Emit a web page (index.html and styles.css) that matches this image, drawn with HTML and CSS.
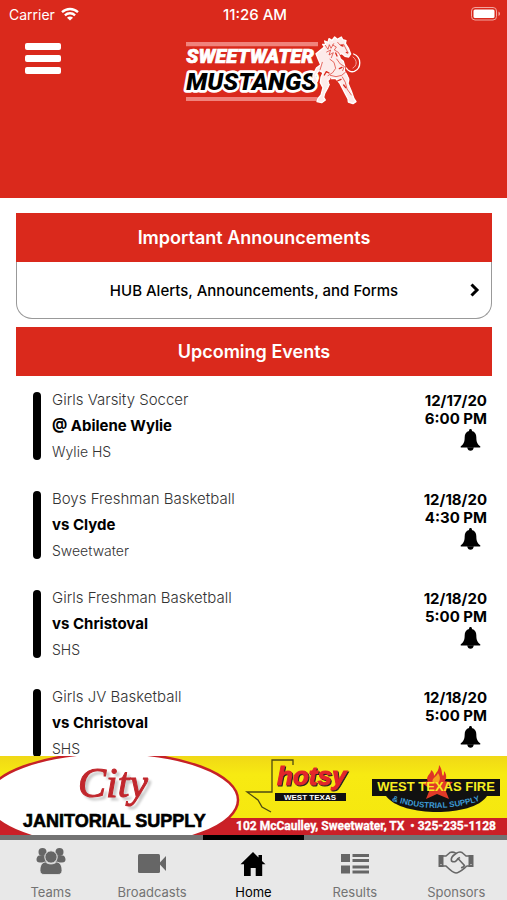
FILE: index.html
```html
<!DOCTYPE html>
<html lang="en">
<head>
  <meta charset="UTF-8">
  <meta name="viewport" content="width=device-width, initial-scale=1.0">
  <title>Sweetwater Mustangs</title>
  <link rel="stylesheet" href="styles.css">
</head>
<body>
  <!-- shared icons -->
  <svg class="sprite" width="0" height="0">
    <symbol id="bell" viewBox="0 0 22 24">
      <path d="M11 1c.9 0 1.500.6 1.500 1.500v.6c3 .8 4.600 3.200 4.600 6.500 0 5 1.200 7.400 4 9.400.5.4.3 1.500-.5 1.500H1.400c-.8 0-1-1.100-.5-1.500 2.800-2 4-4.400 4-9.400 0-3.300 1.600-5.700 4.600-6.500v-.6C9.500 1.600 10.100 1 11 1z"/>
      <path d="M7.500 20h7c-.4 2.400-1.700 3.700-3.500 3.700S7.900 22.400 7.500 20z"/>
    </symbol>
  </svg>

  <header class="header">
    <div class="status">
      <div class="carrier">
        <span>Carrier</span>
        <svg width="18" height="14" viewBox="0 0 18 14" fill="none" stroke="#fff" stroke-width="2.300">
          <path d="M1 5.200a11.600 11.600 0 0 1 16 0M3.900 8.300a7.400 7.400 0 0 1 10.200 0"/>
          <path d="M9 13.600L6 10.700a4.200 4.200 0 0 1 6 0z" fill="#fff" stroke="none"/>
        </svg>
      </div>
      <div class="clock">11:26 AM</div>
      <div class="battery">
        <svg width="30" height="14" viewBox="0 0 30 14">
          <rect x=".5" y=".5" width="25" height="12.500" rx="3.500" fill="none" stroke="#f2a59f"/>
          <rect x="2.500" y="2.500" width="21" height="8.500" rx="1.500" fill="#fff"/>
          <path d="M27.500 4.500c2 .8 2 3.700 0 4.500z" fill="#f2a59f"/>
        </svg>
      </div>
    </div>
    <div class="topbar">
      <button class="menu" type="button" aria-label="Menu">
        <span></span><span></span><span></span>
      </button>
      <svg class="logo" viewBox="33 30 540 210" role="img" aria-label="Sweetwater Mustangs">
        <path d="M45 51H441V64H45zM45 216H440V228H45z" fill="#f0837c"/>
        <text class="logo-top" x="46" y="114">SWEETWATER</text>
        <text class="logo-main" x="46" y="196">MUSTANGS</text>
        <!-- horse -->
        <g stroke-linejoin="round" stroke-linecap="round">
          <path d="M548 87c24 10 24 42 2 52-10 4-20-2-24-10" fill="none" stroke="#fff" stroke-width="4"/>
          <path d="M546 96c14 10 12 27 0 33" fill="none" stroke="#f3a6a1" stroke-width="3"/>
          <path d="M460 66l-5-8 9 1-3-11 10 4 3-11 9 5 8-10 8 7 12-7 4 8 10 3-2 8 9 14 7 18-6 9-11-2-9-8-9 3 4 12 9 8 4 14-1 14 7 12 7 13-3 13 10 24 8 22 6 9-9 6-14-5-1-9-10-19-15-29-12-13-15-1-9 7 5 11-5 11-9 16-3 12 5 8-11 8-14-3 3-10 9-10 6-22-8-15 2-16 6-14-12-7-11 15 7 16-7 10-8-8 1-19 11-22 12-9-6-13-8-20z" fill="#fdebea" stroke="#fff" stroke-width="4"/>
          <g fill="none" stroke="#da291c">
            <path d="M463 61l8 12 4-14 5 11 8-14M467 81l12-6-5 15 13-7-6 15M500 52l7 8 11-2 7 14 6 11M485 60l11 6-6 9 12 7 6 10M477 103l12 9 5 18-9 13-14 9M497 102l11 15 12 7-5 13M478 151l17 4 17-4 12-10M514 156l9 16 5 20 13 18M479 160l-4 14 7 10-9 18M454 112l-7 23M532 148l7 22 14 40" stroke-width="2"/>
            <path d="M510 61l6 2M526 82l4 2M460 150l6-10 8 4M494 84l4 9M505 131l8-4M499 168l11-5M518 180l6 8" stroke-width="4"/>
          </g>
        </g>
      </svg>
    </div>
  </header>

  <main class="content">
    <section class="announcements">
      <h2 class="heading">Important Announcements</h2>
      <a class="announcement" href="#">
        <span>HUB Alerts, Announcements, and Forms</span>
        <svg class="chevron" width="10" height="14" viewBox="0 0 10 14" fill="none" stroke="#000" stroke-width="3">
          <path d="M1.500 1.500L7 7l-5.500 5.500"/>
        </svg>
      </a>
    </section>

    <section>
      <h2 class="heading">Upcoming Events</h2>
      <ul class="events">
        <li class="event">
          <div class="info">
            <p>Girls Varsity Soccer</p>
            <h3>@ Abilene Wylie</h3>
            <p class="place">Wylie HS</p>
          </div>
          <div class="when">
            <time>12/17/20<br>6:00 PM</time>
            <button class="bell" type="button" aria-label="Notify me"><svg><use href="#bell"/></svg></button>
          </div>
        </li>
        <li class="event">
          <div class="info">
            <p>Boys Freshman Basketball</p>
            <h3>vs Clyde</h3>
            <p class="place">Sweetwater</p>
          </div>
          <div class="when">
            <time>12/18/20<br>4:30 PM</time>
            <button class="bell" type="button" aria-label="Notify me"><svg><use href="#bell"/></svg></button>
          </div>
        </li>
        <li class="event">
          <div class="info">
            <p>Girls Freshman Basketball</p>
            <h3>vs Christoval</h3>
            <p class="place">SHS</p>
          </div>
          <div class="when">
            <time>12/18/20<br>5:00 PM</time>
            <button class="bell" type="button" aria-label="Notify me"><svg><use href="#bell"/></svg></button>
          </div>
        </li>
        <li class="event">
          <div class="info">
            <p>Girls JV Basketball</p>
            <h3>vs Christoval</h3>
            <p class="place">SHS</p>
          </div>
          <div class="when">
            <time>12/18/20<br>5:00 PM</time>
            <button class="bell" type="button" aria-label="Notify me"><svg><use href="#bell"/></svg></button>
          </div>
        </li>
      </ul>
    </section>
  </main>

  <a class="ad" href="#">
    <svg viewBox="0 0 507 79">
      <defs>
        <linearGradient id="yellow" x1="0" y1="0" x2="0" y2="1">
          <stop offset="0" stop-color="#f0d816"/>
          <stop offset=".3" stop-color="#f7ea12"/>
          <stop offset="1" stop-color="#f5e80f"/>
        </linearGradient>
        <path id="arc" d="M393 45Q436 59 479 45"/>
      </defs>
      <rect width="507" height="62" fill="url(#yellow)"/>
      <rect y="62" width="507" height="17" fill="#cb1f27"/>
      <ellipse cx="112" cy="44" rx="126" ry="47" fill="#fff" stroke="#c62127" stroke-width="2.500"/>
      <text class="ad-city" x="78" y="41">City</text>
      <text class="ad-name" x="23" y="71">JANITORIAL SUPPLY</text>

      <path d="M293 9V4H272V36H247L258 44L262 51L271 56" fill="none" stroke="#4d4a12" stroke-width="1.300"/>
      <text class="ad-hotsy" x="277" y="29">hotsy</text>
      <rect x="275" y="37" width="71" height="8" fill="#111"/>
      <text class="ad-west" x="310" y="44">WEST TEXAS</text>

      <path d="M386 40H487C480 51 458 56 437 56S394 51 386 40z" fill="#111"/>
      <rect x="372" y="23" width="128" height="17" fill="#111"/>
      <path d="M437 16l4 9 12 1-8 7 4 10-12-5-11 5 4-10-9-7 12-1z" fill="#e03a28"/>
      <path d="M429 27c-5-7 2-8 2-13 3 2 3 4 3 6 3-4 5-6 5-11 4 5 2 8 4 11 1-1 1-3 1-5 4 5 2 9-1 13z" fill="#df3426"/>
      <path d="M433 27c-2-5 3-5 5-10 3 5 2 7 0 11z" fill="#f6a11d"/>
      <text class="ad-fire" x="436" y="35">WEST TEXAS FIRE</text>
      <text class="ad-supply"><textPath href="#arc" startOffset="50%">&amp; INDUSTRIAL SUPPLY</textPath></text>
      <text class="ad-address" x="236" y="74">102 McCaulley, Sweetwater, TX &#160;• 325-235-1128</text>
    </svg>
  </a>

  <nav class="tabs">
    <a class="tab" href="#">
      <svg viewBox="0 0 30 28">
        <circle cx="6.500" cy="4" r="4"/>
        <circle cx="23.500" cy="4" r="4"/>
        <path d="M3 7.500h6.500c-1 3 0 5.500 1.500 7H4c-5 0-4-6-1-7zM27 7.500h-6.500c1 3 0 5.500-1.500 7h7c5 0 4-6 1-7z"/>
        <circle cx="15" cy="9" r="6.200" stroke="#e8e8e8"/>
        <path d="M9.500 14c3 2.600 8 2.600 11 0 4 .3 5.500 4 5.500 8.500 0 2.800-1.600 4-4 4H8c-2.400 0-4-1.200-4-4C4 18 5.500 14.300 9.500 14z" stroke="#e8e8e8" stroke-width=".8"/>
      </svg>
      <span>Teams</span>
    </a>
    <a class="tab" href="#">
      <svg viewBox="0 0 30 28">
        <rect x="1" y="6" width="22" height="19" rx="1.500"/>
        <path d="M22 15.500L29 8v15z"/>
      </svg>
      <span>Broadcasts</span>
    </a>
    <a class="tab active" href="#">
      <svg viewBox="0 0 30 28">
        <path d="M15 4l5.500 5.500V7H24v6l3.500 3.300h-3.300V28h-6.500v-8h-5v8H6V16.300H2.500z"/>
      </svg>
      <span>Home</span>
    </a>
    <a class="tab" href="#">
      <svg viewBox="0 0 30 28">
        <path d="M1 6h9v8H1zM1 17.500h9v8H1zM12.500 6H29v3H12.500zM12.500 11H29v3H12.500zM12.500 17.500H29v3H12.500zM12.500 22.500H29v3H12.500z"/>
      </svg>
      <span>Results</span>
    </a>
    <a class="tab" href="#">
      <svg class="wide" viewBox="0 0 36 28">
        <path d="M.5 7h5v12h-5zM30.500 7h5v12h-5z"/>
        <path d="M2.500 16.500h1M32.500 16.500h1" stroke="#e8e8e8"/>
        <path d="M5 8h3l4-3.500c3-1 4.500 0 6 1 1.500-1 4-2 6-1L28 8h3M5 18h3c4 4 7 7 10 7S24 22 29 18h2M18 5.500c-4 2.500-5.500 4.500-4.500 7.500 3 2 5 0 6.500-2.500l6.500 7c-1.500 2.500-3.500 2-3.500 2M20 10.500l2-1" fill="none" stroke="#666" stroke-width="1.600" stroke-linejoin="round"/>
      </svg>
      <span>Sponsors</span>
    </a>
  </nav>
</body>
</html>
```
FILE: styles.css
```css
*{margin:0;padding:0;box-sizing:border-box;}
html,body{height:100%;}
body{display:flex;flex-direction:column;overflow:hidden;background:#fff;color:#000;font-family:Inter,"Liberation Sans",sans-serif;}
a{color:inherit;text-decoration:none;}
button{border:0;background:none;cursor:pointer;}
.sprite{position:absolute;}

/* header */
.header{flex:none;padding-bottom:93px;background:#da291c;color:#fff;}
.status{display:grid;grid-template-columns:1fr auto 1fr;align-items:center;height:28px;padding:0 6px 0 9px;font-size:14px;}
.carrier{display:flex;align-items:center;gap:6px;}
.clock{font-size:15px;font-weight:500;}
.battery{display:flex;justify-content:flex-end;}
.topbar{display:flex;align-items:flex-start;padding:7px 24px 0 25px;}
.menu{display:flex;flex-direction:column;gap:5px;width:36px;padding-top:8px;}
.menu span{height:7px;border-radius:2px;background:#fff;}
.logo{width:180px;height:70px;margin:0 auto;overflow:visible;}
.logo text{font-family:Roboto,"Liberation Sans",sans-serif;font-weight:900;font-style:italic;}
.logo-top{font-size:60px;fill:#fff;stroke:#fff;stroke-width:2px;}
.logo-main{font-size:74px;fill:#000;stroke:#fff;stroke-width:16px;stroke-linejoin:round;paint-order:stroke;}

/* content */
.content{flex:1;min-height:0;overflow-y:auto;scrollbar-width:none;padding:15px 15px 0 16px;}
.heading{height:49px;background:#da291c;color:#fff;font-size:18px;font-weight:600;line-height:49px;text-align:center;}
.announcements{margin-bottom:8px;}
.announcement{display:flex;align-items:center;height:57px;padding:0 11px;border:1px solid #999;border-top:0;border-radius:0 0 16px 16px;font-size:15px;font-weight:500;}
.announcement span{flex:1;padding-left:10px;text-align:center;}
.events{list-style:none;padding:11px 5px 0 17px;}
.event{display:flex;justify-content:space-between;height:78px;margin-bottom:21px;}
.info{display:flex;flex-direction:column;position:relative;padding-left:19px;line-height:26px;}
.info::before{content:"";position:absolute;left:0;top:5px;bottom:5px;width:8px;border-radius:4px;background:#000;}
.info p{color:#333;font-size:15px;font-weight:300;}
.info h3{font-size:15px;font-weight:700;}
.info .place{font-size:14px;}
.when{padding-top:5px;font-size:15px;font-weight:700;line-height:18px;text-align:right;}
.when time{display:block;}
.bell{width:21px;height:23px;margin-right:6px;}
.bell svg{display:block;width:21px;height:23px;}

/* sponsor banner */
.ad{flex:none;}
.ad svg{display:block;width:100%;}
.ad text{font-family:"Liberation Sans",sans-serif;font-weight:bold;}
.ad .ad-city{font-family:"Liberation Serif",serif;font-size:42px;font-style:italic;font-weight:normal;fill:#c1272d;stroke:#c1272d;stroke-width:1px;filter:drop-shadow(3px 3px 1px #ccc);}
.ad-name{font-size:18px;stroke:#000;stroke-width:.6px;}
.ad-hotsy{font-size:26px;font-style:italic;fill:#e3262b;stroke:#e3262b;stroke-width:1px;filter:drop-shadow(1px 1px 0 #222);}
.ad-west{font-size:8px;fill:#fff;text-anchor:middle;}
.ad-fire{font-size:13px;fill:#f8ee20;text-anchor:middle;}
.ad-supply{font-size:8px;fill:#3d9bd6;text-anchor:middle;}
.ad .ad-address{font-family:Roboto,"Liberation Sans",sans-serif;font-size:12px;fill:#fff;stroke:#fff;stroke-width:.3px;}

/* tab bar */
.tabs{flex:none;display:grid;grid-template-columns:repeat(5,1fr);background:#e8e8e8;}
.tab{display:flex;flex-direction:column;align-items:center;gap:8px;padding-top:8px;border-top:5px solid #737373;color:#737373;font-size:13px;line-height:16px;}
.tab svg{width:30px;height:28px;fill:#666;}
.tab .wide{width:36px;}
.tab.active{border-color:#000;color:#000;}
.tab.active svg{fill:#000;}
```
